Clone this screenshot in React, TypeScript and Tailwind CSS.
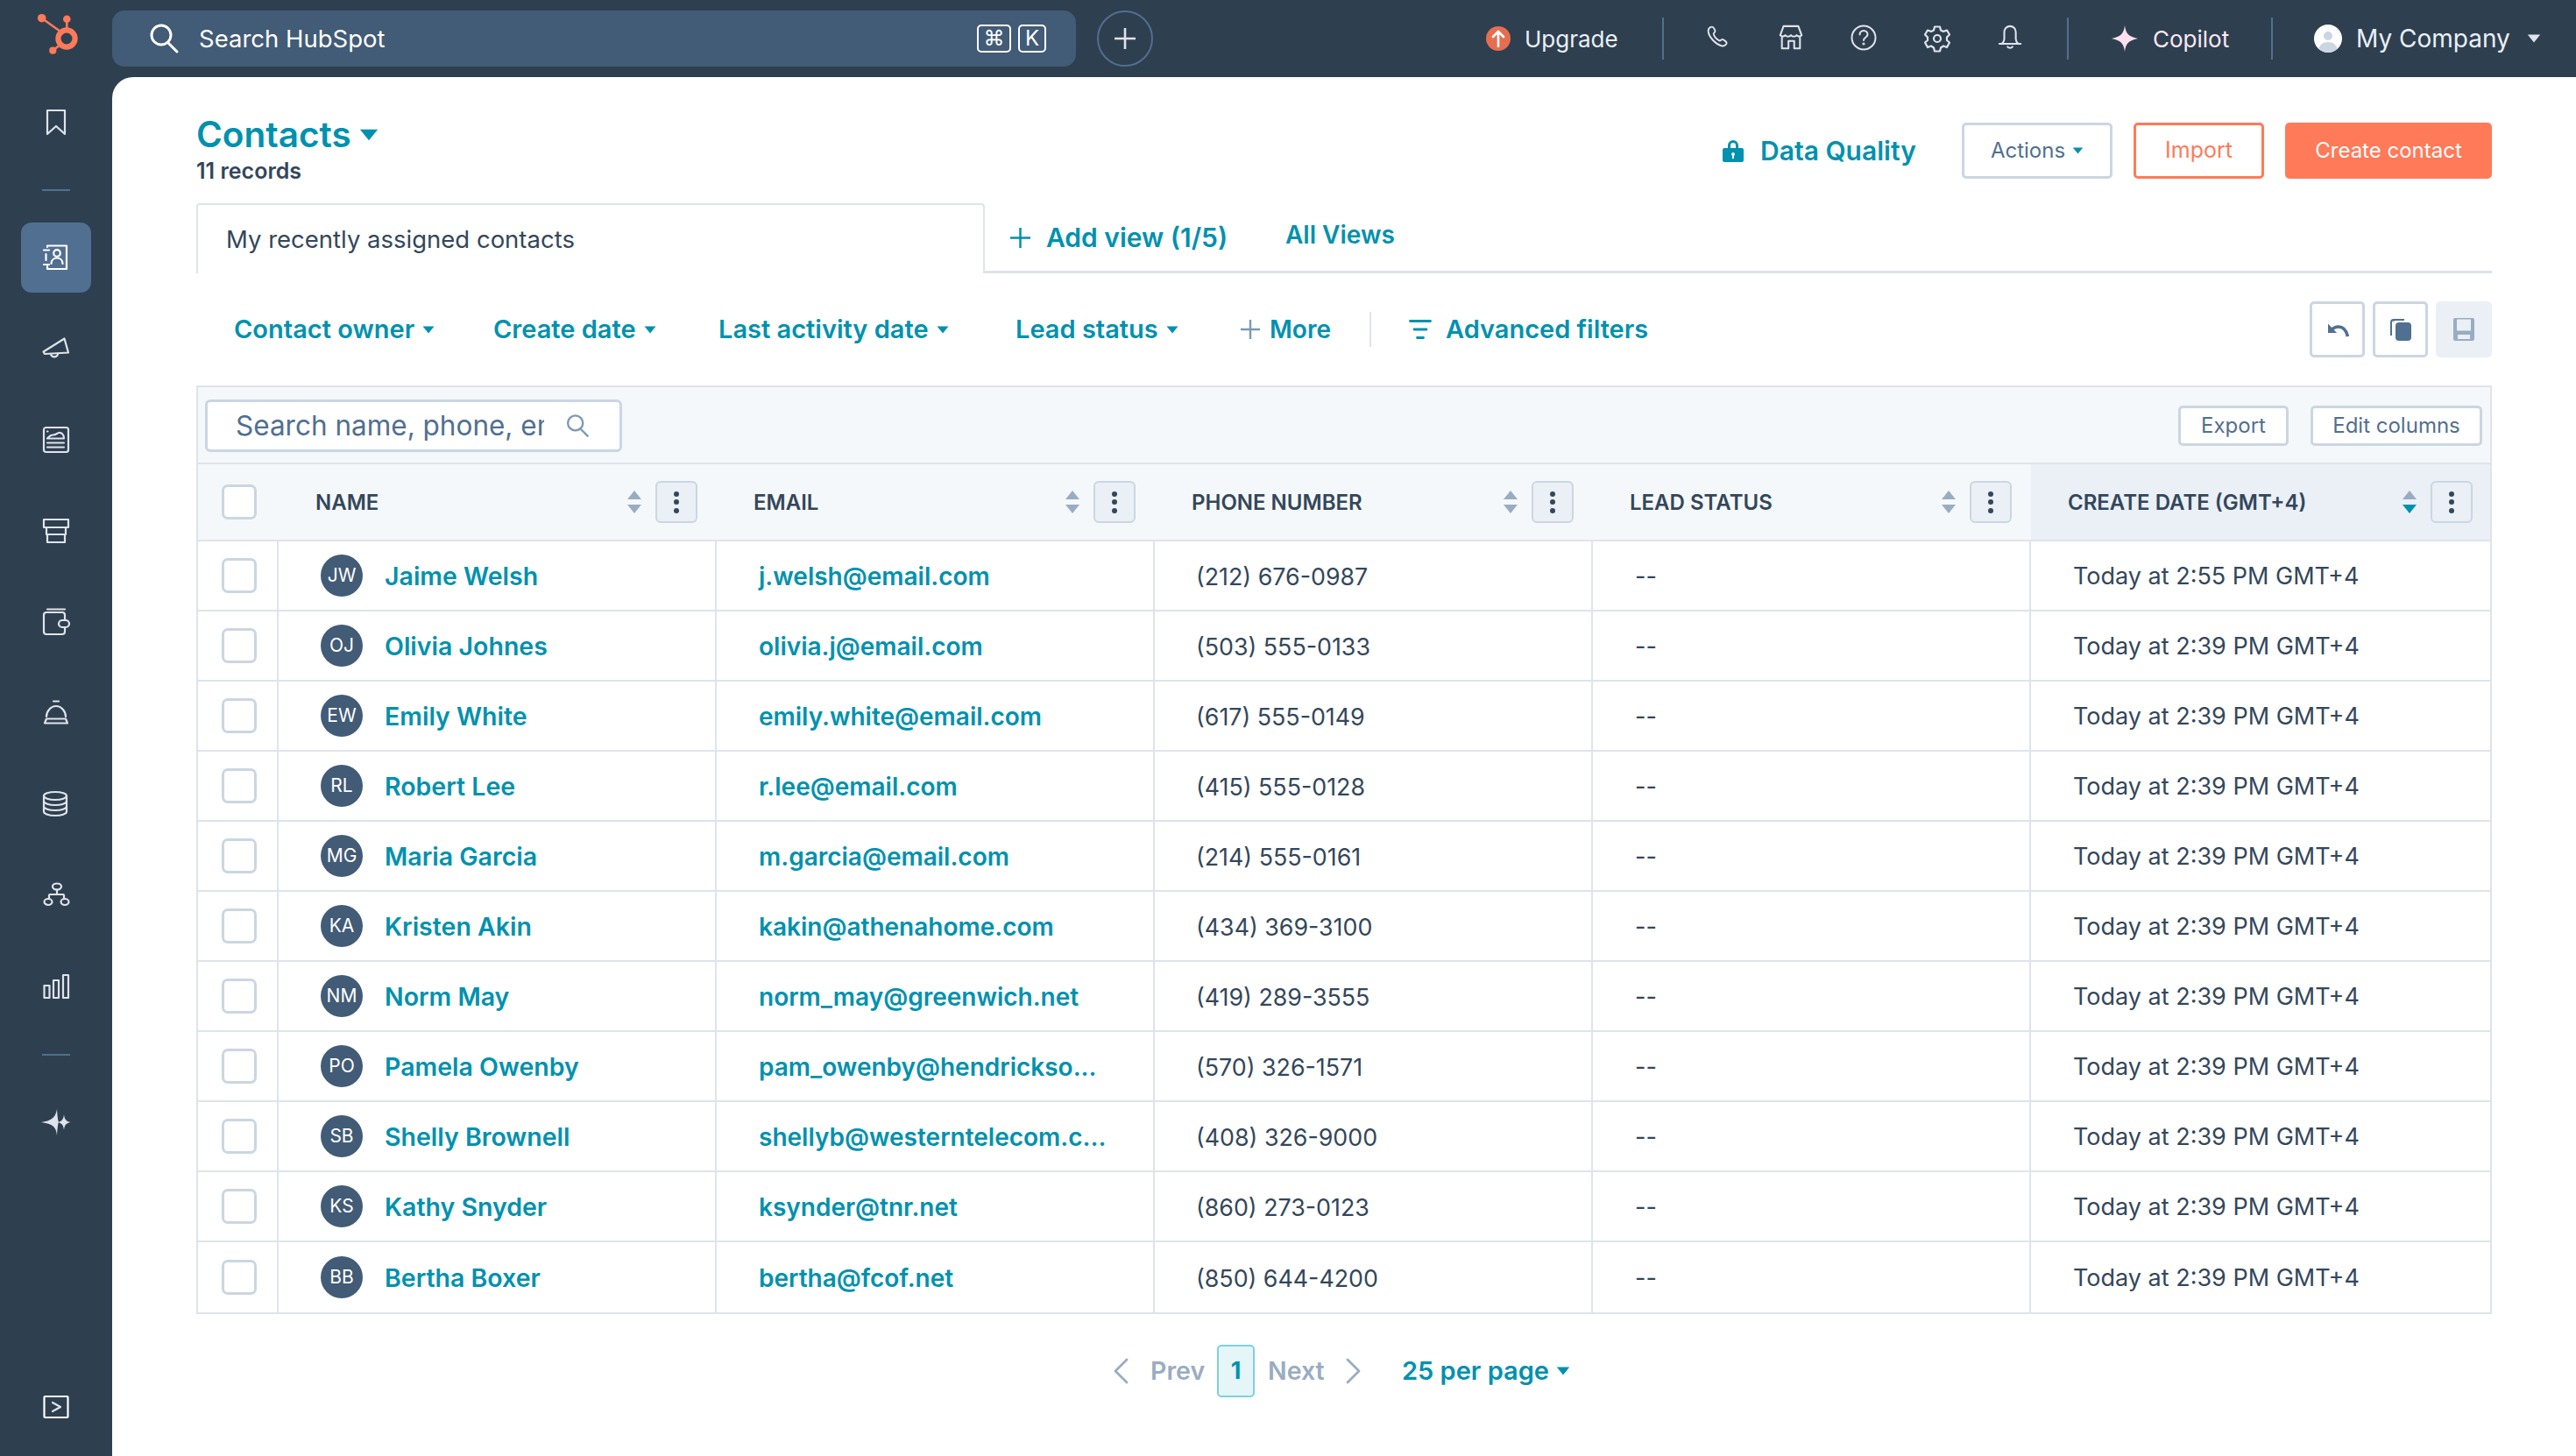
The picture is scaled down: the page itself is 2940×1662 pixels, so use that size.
import React from "react";

const Caret = ({ c = "#0091ae", w = 14, h = 9 }: { c?: string; w?: number; h?: number }) => (
  <svg width={w} height={h} viewBox="0 0 14 9" className="shrink-0"><path d="M0.5 0.5h13L7 8.5z" fill={c} /></svg>
);

const S = ({ children, size = 32 }: { children: React.ReactNode; size?: number }) => (
  <svg width={size} height={size} viewBox="0 0 32 32" fill="none" stroke="#dfe3eb" strokeWidth="2.2" strokeLinejoin="round" strokeLinecap="round">{children}</svg>
);

const Logo = () => (
  <svg width="56" height="56" viewBox="0 0 56 56" fill="#ff7a59">
    <circle cx="38" cy="30" r="9.6" fill="none" stroke="#ff7a59" strokeWidth="6.2" />
    <circle cx="9.7" cy="6.7" r="4.8" />
    <circle cx="38.3" cy="7.7" r="4.3" />
    <circle cx="22.3" cy="43.7" r="4.1" />
    <path d="M9.7 6.7 31 22M38.3 7.7V20M22.3 43.7 32 36" stroke="#ff7a59" strokeWidth="2.6" fill="none" />
  </svg>
);

const SearchIcon = ({ c = "#fff", size = 36, sw = 3 }: { c?: string; size?: number; sw?: number }) => (
  <svg width={size} height={size} viewBox="0 0 36 36" fill="none" stroke={c} strokeWidth={sw} strokeLinecap="round">
    <circle cx="15" cy="14" r="11" />
    <path d="M22.5 22.5 33 33" />
  </svg>
);

const Bookmark = () => <S size={32}><path d="M6 2h20v27L16 20 6 29z" /></S>;
const ContactsI = () => (
  <svg width="32" height="32" viewBox="0 0 32 32" fill="none" stroke="#fff" strokeWidth="2.2" strokeLinecap="round" strokeLinejoin="round">
    <path d="M6 4V2.500h22v26.500H6v-3" />
    <path d="M2 7.500h6M4.500 12v7M2 24h6" />
    <circle cx="17" cy="11" r="3.800" />
    <path d="M10.500 23c0-4 3-6.500 6.500-6.500s6.500 2.500 6.500 6.500" />
  </svg>
);
const Megaphone = () => (
  <S><path d="M1.500 19.500 25.500 4.500 30 20.500 3 22z" /><path d="M10 22.500a4.200 4.200 0 0 0 8 0" /></S>
);
const Doc = () => (
  <S><rect x="2" y="2" width="28" height="28" rx="2.500" /><path d="M6 6.500h.5M6 14.500h19c0-5-3-7-6-6.500-2 .500-3 2.500-6.500 2.500-2 0-4 1-6.500 4zM6 19.500h19M6 24.500h19" /></S>
);
const Store2 = () => (
  <S><rect x="2" y="3" width="28" height="9" /><path d="M5 12v8h22v-8M6 20v9h20v-9" /></S>
);
const Wallet = () => (
  <S><path d="M6 1.500h20" /><path d="M26 14V8a3 3 0 0 0-3-3H5a3 3 0 0 0-3 3v19a3 3 0 0 0 3 3h18a3 3 0 0 0 3-3v-5" /><rect x="19" y="14" width="12" height="8" rx="4" /></S>
);
const Service = () => (
  <S><path d="M13 2.500h6" /><path d="M5 20c0-6 5-12 11-12s11 6 11 12" /><path d="M5 22.500h22l2 5H3z" /></S>
);
const Db = () => (
  <S><ellipse cx="15" cy="6.500" rx="13" ry="4.500" /><path d="M2 6.500v18c0 2.500 6 4.500 13 4.500s13-2 13-4.500v-18M2 12.500c0 2.500 6 4.500 13 4.500s13-2 13-4.500M2 18.500c0 2.500 6 4.500 13 4.500s13-2 13-4.500" /></S>
);
const Tree = () => (
  <S><ellipse cx="17" cy="6" rx="5" ry="3.500" /><ellipse cx="7" cy="23.500" rx="4.500" ry="3.500" /><ellipse cx="26" cy="23.500" rx="4.500" ry="3.500" /><path d="M17 9.500V15M8 20v-4a1 1 0 0 1 1-1h15a1 1 0 0 1 1 1v4" /></S>
);
const Bars = () => (
  <S><rect x="2.500" y="15" width="6" height="14" /><rect x="13" y="9" width="6" height="20" /><rect x="24" y="3" width="6" height="26" /></S>
);
const Spark2 = () => (
  <svg width="34" height="32" viewBox="0 0 34 32" fill="#dfe3eb">
    <path d="M18 1c.6 9 1.200 13.500 2 14.800-.8 1.400-1.400 6-2 15.200-.8-8-3-13-18-15 14-2 16.500-7 18-15z" />
    <path d="M26 7c.5 5 2 8 7.500 9-5.500 1-7 4-7.500 9-.5-5-2-8-7-9 5-1 6.500-4 7-9z" />
  </svg>
);
const Collapse = () => (
  <svg width="30" height="30" viewBox="0 0 30 30" fill="none" stroke="#fff" strokeWidth="2.200" strokeLinecap="round" strokeLinejoin="round">
    <rect x="1.500" y="3" width="27" height="24" rx="1" />
    <path d="M11 10l9 5-9 5" stroke="#dfe3eb" />
  </svg>
);

const Phone = () => (
  <S size={28}><path d="M8 3C6 3 3 5 3 8c0 8 10 18 18 20 3 .5 6-2 6-4 0-1.500-4.500-5-6-4.500-1.500.5-2 2-3.500 1.500-3-1.500-6.500-5.500-7.500-8.500-.3-1.500 2-2.500 2-4C12 7 9.500 3 8 3z" /></S>
);
const StoreTop = () => (
  <S size={30}><path d="M7 2h18l4 11c-2 2-4 2-6 0-2 2-5 2-7 0-2 2-5 2-7 0-2 2-4 2-6 0z" /><path d="M5 16v13h8v-9h7v9h7V16" /></S>
);
const Help = () => (
  <svg width="30" height="30" viewBox="0 0 30 30" fill="none" stroke="#dfe3eb" strokeWidth="2" strokeLinecap="round">
    <circle cx="15" cy="15" r="13.500" />
    <path d="M10.500 11.500a4.500 4.500 0 0 1 9 0c0 3-4.500 3-4.500 6.500" />
    <circle cx="15" cy="22" r=".6" />
  </svg>
);
const Gear = () => (
  <svg width="32" height="32" viewBox="0 0 32 32" fill="none" stroke="#dfe3eb" strokeWidth="2.200" strokeLinejoin="round">
    <circle cx="16" cy="16" r="4" />
    <path d="M13 2.500h6l1 4 3 1.500 4-1.500 3 5-3 3v3.500l3 2.500-3 5.500-4-1.500-3 2-1 4h-6l-1-4-3-2-4 1.500-3-5.500 3-2.500V14.500l-3-3 3-5 4 1.500 3-1.500z" />
  </svg>
);
const Bell = () => (
  <S size={30}><path d="M2 23.500h26" /><path d="M5 23.500c2-2 3-3 3-6V9a7 7 0 0 1 14 0v8.500c0 3 1 4 3 6" /><path d="M12 27c1.500 2 4.500 2 6 0" /></S>
);
const Star = ({ c = "#fde0ec", size = 32 }: { c?: string; size?: number }) => (
  <svg width={size} height={size} viewBox="0 0 32 32" fill={c}><path d="M16 0c1.200 9 3.500 13.500 16 16-12.500 2.500-14.800 7-16 16-1.200-9-3.500-13.500-16-16 12.500-2.500 14.800-7 16-16z" /></svg>
);
const Plus = ({ c, size = 26, sw = 2.6 }: { c: string; size?: number; sw?: number }) => (
  <svg width={size} height={size} viewBox="0 0 26 26" stroke={c} strokeWidth={sw}><path d="M13 1v24M1 13h24" /></svg>
);

const SortArrows = ({ active = false }: { active?: boolean }) => (
  <svg width="16" height="26" viewBox="0 0 16 26" className="shrink-0">
    <path d="M8 0l8 10H0z" fill="#99acc2" />
    <path d="M0 16h16l-8 10z" fill={active ? "#0091ae" : "#99acc2"} />
  </svg>
);

const MenuBtn = () => (
  <div className="w-[48px] h-[48px] rounded-[6px] border-2 border-[#cbd6e2] bg-[#eaf0f6] flex flex-col items-center justify-center gap-[3.500px] shrink-0">
    <span className="w-[6px] h-[6px] rounded-full bg-[#33475b]" />
    <span className="w-[6px] h-[6px] rounded-full bg-[#33475b]" />
    <span className="w-[6px] h-[6px] rounded-full bg-[#33475b]" />
  </div>
);

const Check = () => <div className="w-[40px] h-[40px] rounded-[7px] border-[3px] border-[#cbd6e2] bg-white shrink-0" />;

const V = () => <div className="w-[2px] h-[48px] bg-[#516f90] shrink-0" />;

const HeadCell = ({ label, sorted = false, last = false }: { label: string; sorted?: boolean; last?: boolean }) => (
  <div className={`flex items-center h-full pl-[42px] ${last ? "pr-[20px] bg-[#eaf0f6]" : "pr-[22px]"}`}>
    <span className="pt-[2px] text-[24px] font-semibold text-[#33475b] whitespace-nowrap">{label}</span>
    <div className="ml-auto flex items-center gap-[16px]">
      <SortArrows active={sorted} />
      <MenuBtn />
    </div>
  </div>
);

const rows = [
  ["JW", "Jaime Welsh", "j.welsh@email.com", "(212) 676-0987", "Today at 2:55 PM GMT+4"],
  ["OJ", "Olivia Johnes", "olivia.j@email.com", "(503) 555-0133", "Today at 2:39 PM GMT+4"],
  ["EW", "Emily White", "emily.white@email.com", "(617) 555-0149", "Today at 2:39 PM GMT+4"],
  ["RL", "Robert Lee", "r.lee@email.com", "(415) 555-0128", "Today at 2:39 PM GMT+4"],
  ["MG", "Maria Garcia", "m.garcia@email.com", "(214) 555-0161", "Today at 2:39 PM GMT+4"],
  ["KA", "Kristen Akin", "kakin@athenahome.com", "(434) 369-3100", "Today at 2:39 PM GMT+4"],
  ["NM", "Norm May", "norm_may@greenwich.net", "(419) 289-3555", "Today at 2:39 PM GMT+4"],
  ["PO", "Pamela Owenby", "pam_owenby@hendrickso...", "(570) 326-1571", "Today at 2:39 PM GMT+4"],
  ["SB", "Shelly Brownell", "shellyb@westerntelecom.c...", "(408) 326-9000", "Today at 2:39 PM GMT+4"],
  ["KS", "Kathy Snyder", "ksynder@tnr.net", "(860) 273-0123", "Today at 2:39 PM GMT+4"],
  ["BB", "Bertha Boxer", "bertha@fcof.net", "(850) 644-4200", "Today at 2:39 PM GMT+4"],
];

const colCls = "grid grid-cols-[92px_500px_500px_500px_500px_1fr]";
const divider = "border-r-2 border-[#dfe3eb]";

const Filter = ({ label, w }: { label: string; w: string }) => (
  <div className={`${w} flex items-center gap-[9px] shrink-0`}>
    <span className="text-[29px] font-semibold text-[#0091ae] whitespace-nowrap">{label}</span>
    <Caret />
  </div>
);

const Side = ({ children }: { children: React.ReactNode }) => (
  <div className="h-[104px] w-full flex items-center justify-center">{children}</div>
);

export default function App() {
  return (
    <div className="w-[2940px] h-[1662px] bg-[#2e3f50] flex flex-col overflow-hidden font-[family-name:Inter,sans-serif]">
      {/* top bar */}
      <div className="h-[88px] flex items-center shrink-0">
        <div className="w-[128px] h-full flex items-center pl-[38px] pb-[4px]"><Logo /></div>
        <div className="w-[1100px] h-[64px] rounded-[14px] bg-[#425b76] flex items-center pl-[41px] pr-[34px]">
          <SearchIcon />
          <span className="ml-[22px] pt-[2px] text-[27.500px] text-white whitespace-nowrap">Search HubSpot</span>
          <div className="ml-auto flex gap-[8px]">
            <span className="w-[39px] h-[32px] border-2 border-white rounded-[5px] flex items-center justify-center text-[24px] leading-none text-white font-[family-name:'DejaVu_Sans',sans-serif]">⌘</span>
            <span className="w-[32px] h-[32px] border-2 border-white rounded-[5px] flex items-center justify-center text-[24px] leading-none text-white">K</span>
          </div>
        </div>
        <div className="ml-[24px] w-[64px] h-[64px] rounded-full border-2 border-[#516f90] flex items-center justify-center">
          <Plus c="#dfe3eb" size={26} />
        </div>
        <div className="ml-[380px] w-[28px] h-[28px] rounded-full bg-[#e66e50] flex items-center justify-center">
          <svg width="16" height="20" viewBox="0 0 16 20" fill="none" stroke="#fff" strokeWidth="2.600" strokeLinecap="round" strokeLinejoin="round"><path d="M8 19V2M2 8l6-6 6 6" /></svg>
        </div>
        <span className="ml-[16px] w-[157px] text-[26px] text-[#eaf0f6] whitespace-nowrap">Upgrade</span>
        <V />
        <div className="ml-[20px] flex">
          <div className="w-[84px] flex justify-center"><Phone /></div>
          <div className="w-[82px] flex justify-center"><StoreTop /></div>
          <div className="w-[84px] flex justify-center"><Help /></div>
          <div className="w-[84px] flex justify-center"><Gear /></div>
          <div className="w-[84px] flex justify-center"><Bell /></div>
        </div>
        <div className="ml-[22px]"><V /></div>
        <div className="ml-[49px]"><Star size={30} /></div>
        <span className="ml-[17px] w-[135px] text-[26px] text-[#fde8f0] whitespace-nowrap">Copilot</span>
        <V />
        <div className="ml-[47px] w-[32px] h-[32px] rounded-full bg-white overflow-hidden shrink-0">
          <svg width="32" height="32" viewBox="0 0 32 32" fill="#cbd6e2"><circle cx="16" cy="13" r="5" /><path d="M5 32c0-9 5-12 11-12s11 3 11 12z" /></svg>
        </div>
        <span className="ml-[16px] w-[195px] text-[28px] text-[#eaf0f6] whitespace-nowrap">My Company</span>
        <Caret c="#dfe3eb" w={16} h={10} />
      </div>

      <div className="flex flex-1 min-h-0">
        {/* sidebar */}
        <div className="w-[128px] flex flex-col items-center shrink-0">
          <Side><Bookmark /></Side>
          <div className="mt-[24px] w-[32px] h-[2px] bg-[#516f90] shrink-0" />
          <div className="mt-[36px] w-[80px] h-[80px] rounded-[12px] bg-[#516f90] flex items-center justify-center shrink-0"><ContactsI /></div>
          <div className="mt-[12px] w-full"><Side><Megaphone /></Side></div>
          <Side><Doc /></Side>
          <Side><Store2 /></Side>
          <Side><Wallet /></Side>
          <Side><Service /></Side>
          <Side><Db /></Side>
          <Side><Tree /></Side>
          <Side><Bars /></Side>
          <div className="mt-[25px] w-[32px] h-[2px] bg-[#516f90] shrink-0" />
          <div className="mt-[24px] w-full"><Side><Spark2 /></Side></div>
          <div className="mt-auto mb-[4px] w-full"><Side><Collapse /></Side></div>
        </div>

        {/* main */}
        <div className="flex-1 bg-white rounded-tl-[24px] px-[96px]">
          {/* header */}
          <div className="h-[144px] flex items-start justify-between">
            <div className="pt-[43px]">
              <div className="flex items-center gap-[8px]">
                <span className="text-[40.500px] leading-[46px] font-semibold text-[#0091ae]">Contacts</span>
                <Caret w={24} h={14} />
              </div>
              <div className="mt-[4px] text-[25px] leading-[28px] font-semibold text-[#33475b]">11 records</div>
            </div>
            <div className="pt-[52px] flex items-center">
              <svg width="24" height="26" viewBox="0 0 24 26" fill="#0091ae"><path d="M6 11V7a6 6 0 0 1 12 0v4h-3V7a3 3 0 0 0-6 0v4z" /><path fillRule="evenodd" d="M2 10h20a2 2 0 0 1 2 2v12a2 2 0 0 1-2 2H2a2 2 0 0 1-2-2V12a2 2 0 0 1 2-2zm10 5a2 2 0 0 0-1 3.700V22h2v-3.300A2 2 0 0 0 12 15z" /></svg>
              <span className="ml-[19px] w-[230px] text-[30px] font-semibold text-[#0091ae] whitespace-nowrap">Data Quality</span>
              <div className="w-[172px] h-[64px] rounded-[5px] border-[3px] border-[#cbd6e2] flex items-center justify-center gap-[8px]">
                <span className="text-[24px] text-[#516f90]">Actions</span>
                <Caret w={13} h={8} />
              </div>
              <div className="ml-[24px] w-[149px] h-[64px] rounded-[5px] border-[3px] border-[#ff7a59] flex items-center justify-center text-[25px] text-[#ff7a59]">Import</div>
              <div className="ml-[24px] w-[236px] h-[64px] rounded-[5px] bg-[#ff7a59] flex items-center justify-center text-[24px] text-white">Create contact</div>
            </div>
          </div>

          {/* tabs */}
          <div className="h-[80px] flex border-b-[3px] border-[#dfe3eb] items-stretch">
            <div className="w-[900px] h-[80px] bg-white border-2 border-b-0 border-[#dfe3eb] rounded-t-[4px] flex items-center pl-[32px] pt-[2px] text-[27.500px] text-[#33475b] whitespace-nowrap">My recently assigned contacts</div>
            <div className="flex items-center h-[78px]">
              <div className="ml-[28px]"><Plus c="#0091ae" size={25} sw={2.600} /></div>
              <span className="ml-[17px] w-[273px] text-[30px] font-semibold text-[#0091ae] whitespace-nowrap">Add view (1/5)</span>
              <span className="mb-[6px] text-[28px] font-semibold text-[#0091ae] whitespace-nowrap">All Views</span>
            </div>
          </div>

          {/* filters */}
          <div className="h-[128px] flex items-center pl-[43px]">
            <Filter label="Contact owner" w="w-[296px]" />
            <Filter label="Create date" w="w-[257px]" />
            <Filter label="Last activity date" w="w-[339px]" />
            <Filter label="Lead status" w="w-[256px]" />
            <div className="w-[148px] flex items-center shrink-0">
              <Plus c="#7c98b6" size={24} sw={2.600} />
              <span className="ml-[10px] text-[28px] font-semibold text-[#0091ae]">More</span>
            </div>
            <div className="w-[2px] h-[40px] bg-[#dfe3eb] shrink-0" />
            <div className="ml-[43px]">
              <svg width="26" height="24" viewBox="0 0 26 24" stroke="#0091ae" strokeWidth="2.800" strokeLinecap="round"><path d="M1.500 2.500h23M6 12h14M9.500 21.500h7" /></svg>
            </div>
            <span className="ml-[16px] text-[29px] font-semibold text-[#0091ae] whitespace-nowrap">Advanced filters</span>
            <div className="ml-auto flex gap-[9px]">
              <div className="w-[63px] h-[64px] rounded-[5px] border-[3px] border-[#cbd6e2] flex items-center justify-center">
                <svg width="26" height="20" viewBox="0 0 26 20" fill="none" stroke="#516f90" strokeWidth="3.500" strokeLinejoin="round"><path d="M24.500 18c-2-8-6-11-10.500-11-3 0-6 1-9 4.500" /><path d="M2 3.500V14h10z" fill="#516f90" stroke="none" /></svg>
              </div>
              <div className="w-[63px] h-[64px] rounded-[5px] border-[3px] border-[#cbd6e2] flex items-center justify-center">
                <svg width="24" height="26" viewBox="0 0 24 26" fill="#516f90"><path d="M3 22V5a4 4 0 0 1 4-4h9v2H6a3 3 0 0 0-3 3z" /><path d="M0 20V5a4 4 0 0 1 4-4h8v2H4a2 2 0 0 0-2 2v15z" /><rect x="6" y="5" width="18" height="21" rx="4" /></svg>
              </div>
              <div className="w-[64px] h-[64px] rounded-[5px] bg-[#eaf0f6] flex items-center justify-center">
                <svg width="24" height="26" viewBox="0 0 24 26" fill="#99acc2"><path fillRule="evenodd" d="M2 0h20a2 2 0 0 1 2 2v22a2 2 0 0 1-2 2H2a2 2 0 0 1-2-2V2a2 2 0 0 1 2-2zm2 1.500v13h16v-13zM5 19v5h14v-5z" /></svg>
              </div>
            </div>
          </div>

          {/* table */}
          <div className="border-2 border-[#dfe3eb]">
            <div className="h-[88px] bg-[#f5f8fa] border-b-2 border-[#dfe3eb] flex items-center pl-[8px] pr-[9px] pt-[1px]">
              <div className="w-[476px] h-[60px] bg-white rounded-[6px] border-[3px] border-[#cbd6e2] flex items-center pl-[32px]">
                <div className="w-[352px] overflow-hidden text-[31.500px] text-[#516f90] whitespace-nowrap">Search name, phone, email</div>
                <div className="ml-[24px]"><SearchIcon c="#7c98b6" size={28} sw={3} /></div>
              </div>
              <div className="ml-auto w-[126px] h-[46px] bg-white rounded-[5px] border-[3px] border-[#cbd6e2] flex items-center justify-center text-[24px] text-[#516f90]">Export</div>
              <div className="ml-[25px] w-[196px] h-[46px] bg-white rounded-[5px] border-[3px] border-[#cbd6e2] flex items-center justify-center text-[24px] text-[#516f90]">Edit columns</div>
            </div>
            <div className={`${colCls} h-[88px] bg-[#f5f8fa] border-b-2 border-[#dfe3eb]`}>
              <div className="flex items-center pl-[27px]"><Check /></div>
              <HeadCell label="NAME" />
              <HeadCell label="EMAIL" />
              <HeadCell label="PHONE NUMBER" />
              <HeadCell label="LEAD STATUS" />
              <HeadCell label="CREATE DATE (GMT+4)" sorted last />
            </div>
            {rows.map((r, i) => (
              <div key={r[0]} className={`${colCls} h-[80px] ${i < rows.length - 1 ? "border-b-2" : "border-b-0"} border-[#dfe3eb] text-[27px] text-[#33475b]`}>
                <div className={`flex items-center pl-[27px] ${divider}`}><Check /></div>
                <div className={`flex items-center pl-[48px] ${divider}`}>
                  <div className="w-[48px] h-[48px] rounded-full bg-[#425b76] flex items-center justify-center text-[21px] text-white shrink-0">{r[0]}</div>
                  <span className="ml-[25px] pt-[2px] text-[28.500px] font-semibold text-[#0091ae] whitespace-nowrap">{r[1]}</span>
                </div>
                <div className={`flex items-center pl-[48px] pt-[2px] text-[28px] font-semibold text-[#0091ae] whitespace-nowrap ${divider}`}>{r[2]}</div>
                <div className={`flex items-center pl-[47px] pt-[2px] text-[26.800px] whitespace-nowrap ${divider}`}>{r[3]}</div>
                <div className={`flex items-center pl-[48px] pt-[2px] whitespace-nowrap ${divider}`}>--</div>
                <div className="flex items-center pl-[48px] pt-[2px] whitespace-nowrap">{r[4]}</div>
              </div>
            ))}
          </div>

          {/* pagination */}
          <div className="mt-[35px] flex items-center pl-[1047px]">
            <svg width="17" height="30" viewBox="0 0 17 30" fill="none" stroke="#99acc2" strokeWidth="2.800" strokeLinecap="round" strokeLinejoin="round"><path d="M15 2 2 15l13 13" /></svg>
            <span className="ml-[25px] w-[76px] text-[28.500px] font-semibold text-[#99acc2]">Prev</span>
            <div className="w-[43px] h-[60px] rounded-[5px] border-2 border-[#7fd1de] bg-[#e5f5f8] flex items-center justify-center text-[27px] font-bold text-[#0091ae]">1</div>
            <span className="ml-[15px] w-[89px] text-[28.500px] font-semibold text-[#99acc2]">Next</span>
            <svg width="17" height="30" viewBox="0 0 17 30" fill="none" stroke="#99acc2" strokeWidth="2.800" strokeLinecap="round" strokeLinejoin="round"><path d="M2 2l13 13L2 28" /></svg>
            <span className="ml-[47px] w-[176px] text-[29px] font-semibold text-[#0091ae] whitespace-nowrap">25 per page</span>
            <Caret w={16} h={10} />
          </div>
        </div>
      </div>
    </div>
  );
}
